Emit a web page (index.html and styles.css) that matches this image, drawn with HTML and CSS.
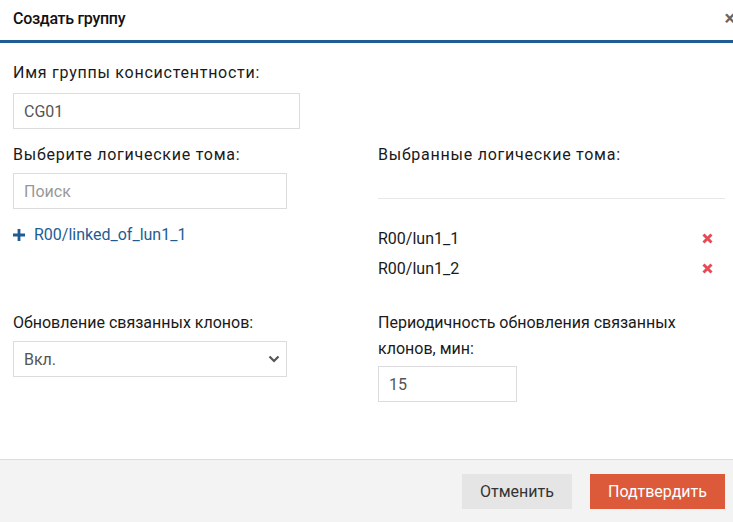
FILE: index.html
```html
<!DOCTYPE html>
<html lang="ru">
<head>
<meta charset="utf-8">
<link rel="stylesheet" href="styles.css">
</head>
<body>
<div class="modal">
  <div class="modal-header">
    <h4 class="title">Создать группу</h4>
    <span class="close">&times;</span>
  </div>
  <div class="modal-body">
    <label class="label wide">Имя группы консистентности:</label>
    <div class="input name-input">CG01</div>
    <div class="cols">
      <div class="col">
        <label class="label wide">Выберите логические тома:</label>
        <div class="input search placeholder">Поиск</div>
        <div class="avail">
          <svg class="plus" width="12" height="12" viewBox="0 0 12 12"><path d="M4.6 0h2.8v4.6H12v2.8H7.4V12H4.6V7.4H0V4.6h4.6z" fill="#1e5d94"/></svg>
          <span>R00/linked_of_lun1_1</span>
        </div>
      </div>
      <div class="col">
        <label class="label wide">Выбранные логические тома:</label>
        <div class="divider"></div>
        <ul class="selected">
          <li><span>R00/lun1_1</span><svg class="rm" width="11" height="11" viewBox="0 0 11 11"><path d="M1.5 1.5l8 8M9.5 1.5l-8 8" stroke="#e64b57" stroke-width="3"/></svg></li>
          <li><span>R00/lun1_2</span><svg class="rm" width="11" height="11" viewBox="0 0 11 11"><path d="M1.5 1.5l8 8M9.5 1.5l-8 8" stroke="#e64b57" stroke-width="3"/></svg></li>
        </ul>
      </div>
      <div class="col lower">
        <label class="label">Обновление связанных клонов:</label>
        <div class="input select">
          <span>Вкл.</span>
          <svg width="12" height="8" viewBox="0 0 12 8"><path d="M1.5 1.5l4.5 4.5 4.5-4.5" stroke="#555" stroke-width="2.2" fill="none"/></svg>
        </div>
      </div>
      <div class="col lower">
        <label class="label tall">Периодичность обновления связанных клонов, мин:</label>
        <div class="input period">15</div>
      </div>
    </div>
  </div>
  <div class="modal-footer">
    <button class="btn btn-cancel">Отменить</button>
    <button class="btn btn-confirm">Подтвердить</button>
  </div>
</div>
</body>
</html>
```
FILE: styles.css
```css
* { box-sizing: border-box; }
html, body { margin: 0; padding: 0; background: #fff; }
body {
  font-family: Roboto, "Liberation Sans", sans-serif;
  font-size: 16px;
  color: #222;
  width: 733px;
  height: 522px;
  overflow: hidden;
}
.modal { width: 733px; height: 522px; display: flex; flex-direction: column; }
.modal-header {
  height: 43px;
  border-bottom: 3px solid #1e5d94;
  display: flex;
  align-items: center;
  justify-content: space-between;
  padding: 0 0 0 13px;
}
.title {
  margin: 0;
  font-size: 16px;
  font-weight: 500;
  color: #111;
  letter-spacing: -0.3px;
  padding-bottom: 3px;
}
.close {
  font-size: 20px;
  font-weight: 700;
  color: #666;
  line-height: 1;
  margin-right: -2px;
  padding-bottom: 4px;
}
.modal-body {
  flex: 1;
  padding: 19px 8px 0 13px;
}
.label { display: block; line-height: 22px; color: #1a1a1a; }
.label.wide { letter-spacing: 0.75px; }
.input {
  border: 1px solid #dcdcdc;
  height: 36px;
  display: flex;
  align-items: center;
  padding: 0 10px;
  color: #555;
}
.name-input { width: 287px; margin-top: 9px; }
.placeholder { color: #999; }
.cols {
  display: grid;
  grid-template-columns: 365px 1fr;
  margin-top: 15px;
}
.search { width: 274px; margin-top: 7px; }
.avail {
  display: flex;
  align-items: center;
  gap: 9px;
  margin-top: 16px;
  color: #1e5d94;
  line-height: 20px;
}
.divider { border-top: 1px solid #e8e8e8; margin-top: 32px; }
.selected { list-style: none; margin: 24px 0 0; padding: 0; }
.selected li {
  display: flex;
  justify-content: space-between;
  align-items: center;
  height: 30px;
  color: #1a1a1a;
  padding-right: 12px;
}
.lower { margin-top: 29px; }
.label.tall { line-height: 26px; margin-top: -2px; }
.select { width: 274px; margin-top: 7px; justify-content: space-between; padding-right: 6px; }
.period { width: 139px; margin-top: 4px; }
.modal-footer {
  height: 63px;
  background: #f3f3f3;
  border-top: 1px solid #dcdcdc;
  display: flex;
  justify-content: flex-end;
  align-items: center;
  gap: 18px;
  padding: 0 8px 0 0;
}
.btn {
  font-family: Roboto, "Liberation Sans", sans-serif;
  font-size: 16px;
  border: none;
  height: 35px;
  padding: 0 15px;
}
.btn-cancel { background: #e5e5e5; color: #333; width: 110px; }
.btn-confirm { background: #dc5a3a; color: #fff; width: 135px; }
```
